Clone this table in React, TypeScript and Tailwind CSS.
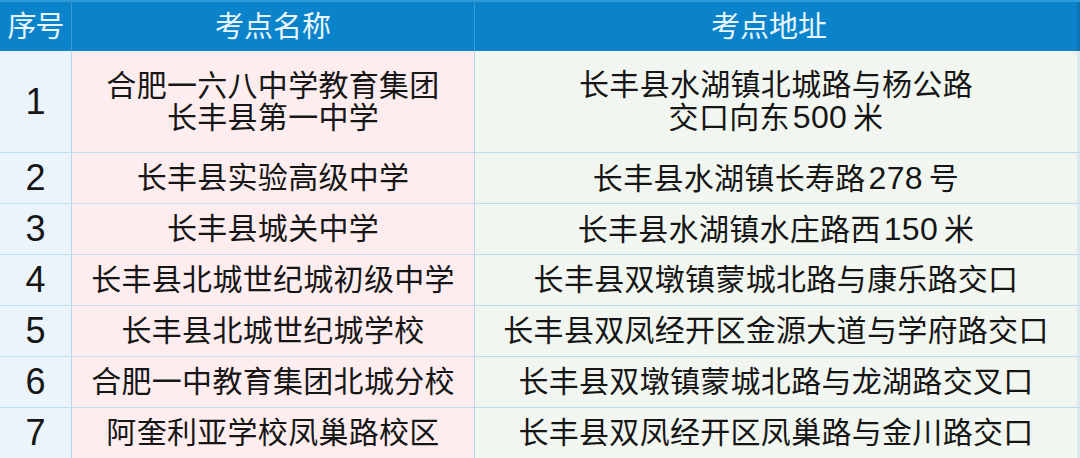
const rows: { no: string; name: string[]; addr: string[] }[] = [
  {
    no: "1",
    name: ["合肥一六八中学教育集团", "长丰县第一中学"],
    addr: ["长丰县水湖镇北城路与杨公路", "交口向东500米"],
  },
  { no: "2", name: ["长丰县实验高级中学"], addr: ["长丰县水湖镇长寿路278号"] },
  { no: "3", name: ["长丰县城关中学"], addr: ["长丰县水湖镇水庄路西150米"] },
  { no: "4", name: ["长丰县北城世纪城初级中学"], addr: ["长丰县双墩镇蒙城北路与康乐路交口"] },
  { no: "5", name: ["长丰县北城世纪城学校"], addr: ["长丰县双凤经开区金源大道与学府路交口"] },
  { no: "6", name: ["合肥一中教育集团北城分校"], addr: ["长丰县双墩镇蒙城北路与龙湖路交叉口"] },
  { no: "7", name: ["阿奎利亚学校凤巢路校区"], addr: ["长丰县双凤经开区凤巢路与金川路交口"] },
];

// digits inside the Chinese text sit a bit bigger and spaced out
function Line({ text }: { text: string }) {
  const parts = text.split(/(\d+)/);
  return (
    <span>
      {parts.map((p, i) =>
        /^\d+$/.test(p) ? (
          <span key={i} className="text-[32px] leading-[32px] ml-[3px] mr-[6px]">
            {p}
          </span>
        ) : (
          <span key={i}>{p}</span>
        )
      )}
    </span>
  );
}

export default function App() {
  return (
    <div
      className="w-[1080px] h-[458px] overflow-hidden bg-[#f2f6f0] text-[#161616]"
      style={{ fontFamily: '"Liberation Sans", "Noto Sans CJK SC", sans-serif' }}
    >
      {/* header */}
      <div className="grid grid-cols-[72px_403px_1fr] h-[51px] bg-[#0a83ca] border-t-2 border-[#2f9ad9] text-[#e9f6ff] text-[29px] leading-[32px]">
        <div className="flex items-center justify-center border-r border-[#3b9bd6] tracking-[-1px]">序号</div>
        <div className="flex items-center justify-center border-r border-[#3b9bd6]">考点名称</div>
        <div className="flex items-center justify-center pr-[14px] border-r-[3px] border-[#0b74b4]">考点地址</div>
      </div>

      {rows.map((r) => (
        <div
          key={r.no}
          className={`grid grid-cols-[72px_403px_1fr] overflow-hidden border-b border-[#bcdcef] ${
            r.name.length > 1 ? "h-[102px]" : "h-[51px]"
          }`}
        >
          <div className="flex items-center justify-center bg-[#ebf3fb] border-r border-[#b7d6ee] text-[36px] leading-[36px]">
            {r.no}
          </div>
          <div className="flex flex-col items-center justify-center bg-[#fdedef] border-r border-[#b7d6ee] text-[30px] leading-[32px] tracking-[0.3px]">
            {r.name.map((t) => (
              <span key={t}>{t}</span>
            ))}
          </div>
          <div className="flex flex-col items-center justify-center bg-[#f2f6f0] border-r-[3px] border-[#dbe9ef] text-[30px] leading-[32px] tracking-[0.3px]">
            {r.addr.map((t) => (
              <Line key={t} text={t} />
            ))}
          </div>
        </div>
      ))}
    </div>
  );
}
